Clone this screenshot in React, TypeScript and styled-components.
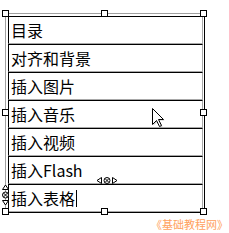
import * as React from 'react';
import styled, { createGlobalStyle } from 'styled-components';

const GlobalStyle = createGlobalStyle`
  html, body {
    margin: 0;
    padding: 0;
    background: #ffffff;
  }
  body {
    font-family: "Noto Sans CJK SC", "Noto Sans", sans-serif;
  }
`;

const Page = styled.div`
  width: 229px;
  height: 233px;
  padding: 13px 0 0 5px;
  box-sizing: border-box;
  position: relative;
  overflow: hidden;
`;

const Frame = styled.div`
  position: relative;
  width: 200px;
  height: 200px;
  box-sizing: border-box;
  border-top: 1px solid #a0a0a0;
  border-left: 1px solid #a0a0a0;
  border-right: 1px solid #000;
  border-bottom: 1px solid #000;
  padding: 2px 1px 0 2px;
`;

const List = styled.ul`
  list-style: none;
  margin: 0;
  padding: 0;
  display: flex;
  flex-direction: column;
`;

const Item = styled.li`
  height: 28px;
  box-sizing: border-box;
  border-top: 1px solid #000;
  border-left: 1px solid #000;
  border-right: 1px solid #a8a8a8;
  border-bottom: 1px solid #a8a8a8;
  padding-left: 2px;
  display: flex;
  align-items: center;
  font-size: 16px;
  color: #000;
  line-height: 1;
`;

const Caret = styled.span`
  display: inline-block;
  width: 0;
  height: 17px;
  border-left: 1px solid #000;
  margin-left: 1px;
`;

const Handle = styled.span<{ $x: string; $y: string }>`
  position: absolute;
  left: ${(p) => p.$x};
  top: ${(p) => p.$y};
  width: 7px;
  height: 7px;
  box-sizing: border-box;
  margin: -4px 0 0 -4px;
  background: #fff;
  border: 1px solid #000;
`;

const Marker = styled.svg<{ $x: number; $y: number }>`
  position: absolute;
  left: ${(p) => p.$x}px;
  top: ${(p) => p.$y}px;
  overflow: visible;
`;

const Pointer = styled.svg`
  position: absolute;
  left: 152px;
  top: 108px;
  overflow: visible;
`;

const Footer = styled.div`
  display: flex;
  justify-content: flex-end;
  padding: 5px 1px 0 0;
  font-size: 11px;
  line-height: 13px;
  color: #ffa15e;
  letter-spacing: 0;
`;

const items = ['目录', '对齐和背景', '插入图片', '插入音乐', '插入视频', '插入Flash'];

const handles: Array<[string, string]> = [
  ['0px', '0px'],
  ['50%', '0px'],
  ['100%', '0px'],
  ['0px', '50%'],
  ['100%', '50%'],
  ['0px', '100%'],
  ['50%', '100%'],
  ['100%', '100%'],
];

const HMarker = () => (
  <Marker $x={90} $y={163} width="22" height="7" viewBox="0 0 22 7">
    <polygon points="5.5,0.5 1,3.5 5.5,6.5" fill="#fff" stroke="#000" strokeWidth="1" />
    <circle cx="11" cy="3.5" r="3" fill="#fff" stroke="#000" strokeWidth="1" />
    <line x1="9" y1="1.5" x2="13" y2="5.5" stroke="#000" strokeWidth="1" />
    <line x1="13" y1="1.5" x2="9" y2="5.5" stroke="#000" strokeWidth="1" />
    <polygon points="16.5,0.5 21,3.5 16.5,6.5" fill="#fff" stroke="#000" strokeWidth="1" />
  </Marker>
);

const VMarker = () => (
  <Marker $x={-4} $y={170} width="7" height="22" viewBox="0 0 7 22">
    <polygon points="0.5,5.5 3.5,1 6.5,5.5" fill="#fff" stroke="#000" strokeWidth="1" />
    <circle cx="3.5" cy="11" r="3" fill="#fff" stroke="#000" strokeWidth="1" />
    <line x1="1.5" y1="9" x2="5.5" y2="13" stroke="#000" strokeWidth="1" />
    <line x1="5.5" y1="9" x2="1.5" y2="13" stroke="#000" strokeWidth="1" />
    <polygon points="0.5,16.5 3.5,21 6.5,16.5" fill="#fff" stroke="#000" strokeWidth="1" />
  </Marker>
);

const App = () => {
  return (
    <Page>
      <GlobalStyle />
      <Frame>
        <List>
          {items.map((t) => (
            <Item key={t}>{t}</Item>
          ))}
          <Item>
            插入表格
            <Caret />
          </Item>
        </List>
        {handles.map(([x, y]) => (
          <Handle key={x + y} $x={x} $y={y} />
        ))}
        <HMarker />
        <VMarker />
      </Frame>
      <Pointer width="13" height="20" viewBox="0 0 13 20">
        <polygon
          points="1.5,1.5 1.5,17.5 5.5,13.5 8.5,19.5 10.5,18.5 7.5,12.5 12.5,12.5"
          fill="#999"
          opacity="0.5"
        />
        <polygon
          points="0.5,0.5 0.5,16.5 4.5,12.5 7.5,18.5 9.5,17.5 6.5,11.5 11.5,11.5"
          fill="#fff"
          stroke="#000"
          strokeWidth="1"
          strokeLinejoin="miter"
        />
      </Pointer>
      <Footer>《基础教程网》</Footer>
    </Page>
  );
};

export default App;
